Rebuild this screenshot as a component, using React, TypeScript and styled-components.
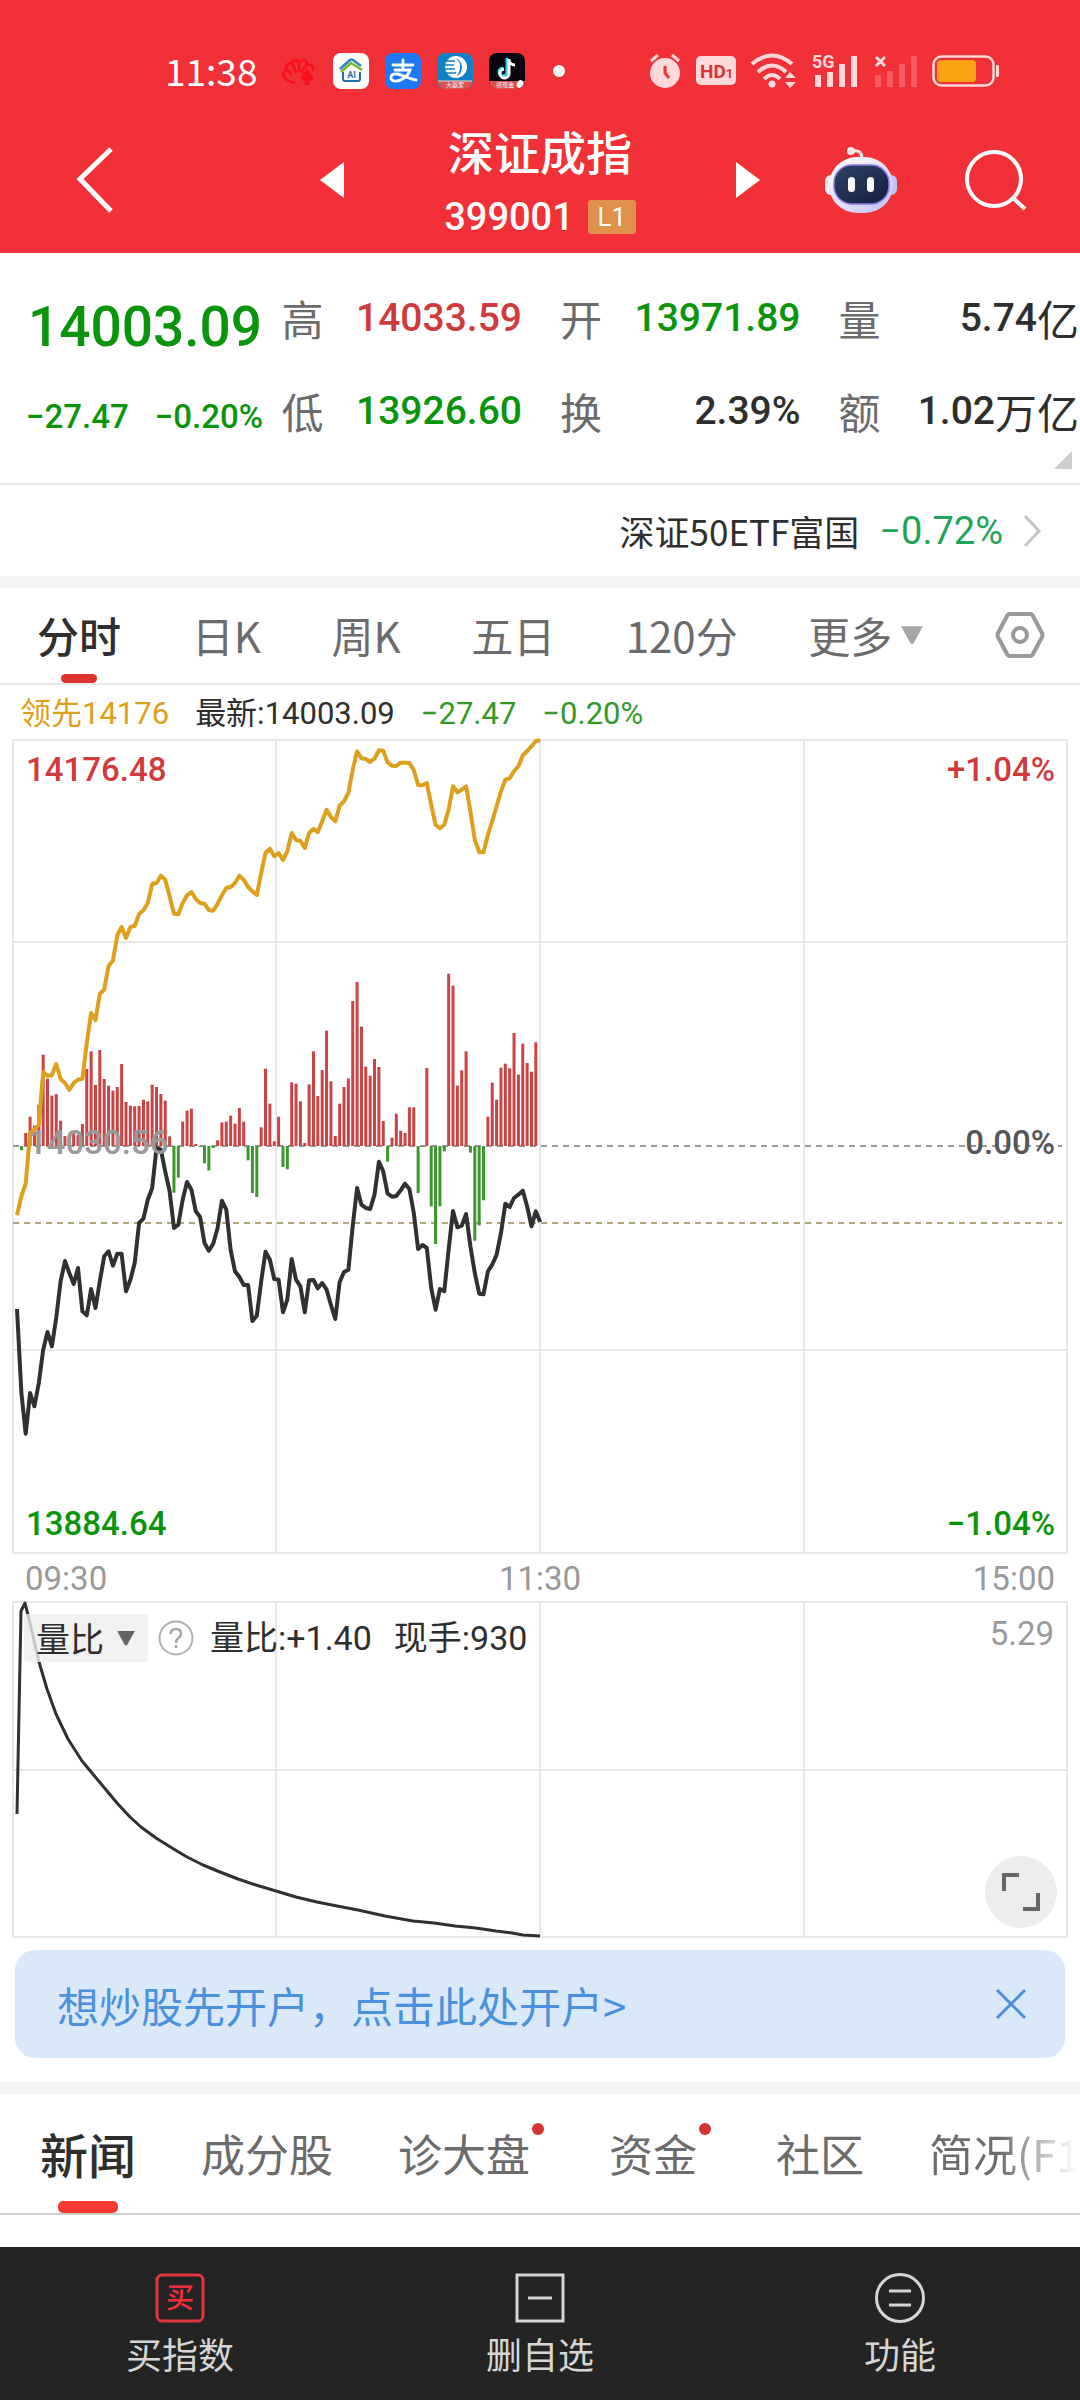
import React from "react";
import styled, { createGlobalStyle } from "styled-components";

const CJK = `"Noto Sans CJK SC", sans-serif`;
const NUM = `Roboto, "Noto Sans CJK SC", sans-serif`;
const C = {
  brand: "#f13037",
  up: "#cf3a3c",
  down: "#0a940c",
  ink: "#2e2e2e",
  sub: "#6b6b6b",
  mute: "#999999",
  line: "#e8e8e8",
  band: "#f4f4f4",
  gold: "#dd9f1c",
};

const Global = createGlobalStyle`
  * { box-sizing: border-box; }
  body { margin: 0; background: #fff; font-family: ${CJK}; color: ${C.ink}; }
  button, select { font: inherit; color: inherit; background: none; border: 0; padding: 0; margin: 0; cursor: pointer; }
  svg { display: block; flex: none; overflow: visible; }
  h1, p, dl, dd, dt { margin: 0; font-weight: 400; }
`;

const Page = styled.div`
  min-height: 100vh;
  display: flex;
  flex-direction: column;
  overflow-x: hidden;
`;
const Header = styled.header`
  background: ${C.brand};
  color: #fff;
`;
const StatusBar = styled.div`
  display: flex;
  align-items: center;
  justify-content: space-between;
  height: 110px;
  padding: 32px 80px 0 165px;
`;
const StatusGroup = styled.div<{ $gap: number }>`
  display: flex;
  align-items: center;
  gap: ${(p) => p.$gap}px;
`;
const Clock = styled.time`
  font: 400 37px/40px ${CJK};
  margin-right: 8px;
  padding-bottom: 2px;
`;
const TitleBar = styled.div`
  display: grid;
  grid-template-columns: 1fr auto 1fr;
  align-items: center;
  height: 143px;
  padding: 0 53px 4px;
`;
const Switcher = styled.div`
  display: flex;
  align-items: center;
  gap: 100px;
  grid-column: 2;
`;
const TitleSide = styled.div<{ $end?: boolean }>`
  display: flex;
  align-items: center;
  gap: 68px;
  padding-left: 23px;
  justify-content: ${(p) => (p.$end ? "flex-end" : "flex-start")};
`;
const TitleBlock = styled.div`
  display: flex;
  flex-direction: column;
  align-items: center;
  gap: 12px;
`;
const Title = styled.h1`
  font: 500 46px/62px ${CJK};
`;
const CodeLine = styled.p`
  display: flex;
  align-items: center;
  gap: 14px;
  font: 500 38px/48px ${NUM};
`;
const Level = styled.span`
  width: 48px;
  background: #e0904a;
  border-radius: 3px;
  text-align: center;
  font: 400 26px/34px ${NUM};
`;

const Quote = styled.section`
  position: relative;
  display: grid;
  grid-template-columns: minmax(0, 217fr) repeat(3, minmax(0, 240fr));
  column-gap: 38px;
  height: 232px;
  padding: 18px 1px 0 26px;
  border-bottom: 2px solid ${C.line};
`;
const Column = styled.dl`
  display: grid;
  grid-template-rows: 93px 93px;
  align-items: center;
`;
const Summary = styled.div`
  display: grid;
  grid-template-rows: 112px 68px;
  align-items: center;
  align-content: start;
  color: ${C.down};
  margin-right: -38px;
  white-space: nowrap;
`;
const Price = styled.strong`
  font: 500 55px/80px ${NUM};
  padding-left: 2px;
`;
const Changes = styled.div`
  display: flex;
  gap: 26px;
  font: 500 33px/44px ${NUM};
`;
const Stat = styled.div`
  display: flex;
  justify-content: space-between;
  align-items: center;
  white-space: nowrap;
  line-height: 60px;
`;
const StatName = styled.dt`
  font-size: 42px;
  color: ${C.sub};
`;
const StatValue = styled.dd<{ $color: string }>`
  display: flex;
  font-family: ${NUM};
  font-size: 39px;
  font-weight: 500;
  color: ${(p) => p.$color};
`;
const Unit = styled.span`
  font: 400 42px/60px ${CJK};
`;
const Corner = styled.svg`
  position: absolute;
  right: 8px;
  bottom: 14px;
`;

const EtfRow = styled.a`
  display: flex;
  align-items: center;
  justify-content: flex-end;
  gap: 20px;
  height: 91px;
  padding: 0 38px 0 36px;
  color: ${C.ink};
  text-decoration: none;
  font-size: 35px;
`;
const EtfChange = styled.span`
  font: 400 38px/48px ${NUM};
  color: #20a35a;
`;
const Band = styled.div`
  height: 12px;
  background: ${C.band};
`;

const PeriodTabs = styled.nav`
  display: flex;
  align-items: stretch;
  justify-content: space-between;
  height: 97px;
  padding: 0 35px 0 37px;
  border-bottom: 2px solid ${C.line};
`;
const Tab = styled.button<{ $on?: boolean }>`
  display: flex;
  align-items: center;
  gap: 8px;
  position: relative;
  padding-bottom: 2px;
  font-size: 42px;
  font-weight: ${(p) => (p.$on ? 500 : 400)};
  color: ${(p) => (p.$on ? C.ink : C.sub)};
`;
const Underline = styled.i<{ $w: number; $h: number; $color: string }>`
  position: absolute;
  left: 50%;
  bottom: 0;
  width: ${(p) => p.$w}px;
  height: ${(p) => p.$h}px;
  margin-left: ${(p) => -p.$w / 2}px;
  border-radius: 5px;
  background: ${(p) => p.$color};
`;
const Legend = styled.div`
  display: flex;
  align-items: center;
  gap: 26px;
  height: 54px;
  padding: 4px 20px 0;
  font: 400 31px/48px ${NUM};
`;
const Tint = styled.span<{ $color: string }>`
  color: ${(p) => p.$color};
`;
const Plot = styled.svg`
  width: 100%;
  height: auto;
`;
const TimeAxis = styled.div`
  display: flex;
  justify-content: space-between;
  padding: 2px 25px 0;
  font: 400 33px/45px ${NUM};
  color: ${C.mute};
`;
const VolumePanel = styled.section`
  position: relative;
`;
const VolumeBar = styled.div`
  position: absolute;
  left: 24px;
  right: 26px;
  top: 13px;
  display: flex;
  align-items: center;
  gap: 10px;
  font: 400 34px/48px ${NUM};
`;
const PickerBox = styled.label`
  display: flex;
  align-items: center;
  gap: 10px;
  height: 48px;
  padding: 0 12px;
  border-radius: 4px;
  background: rgba(238, 238, 238, 0.8);
`;
const Picker = styled.select`
  appearance: none;
  font-family: ${CJK};
  width: 70px;
  height: 48px;
  outline: none;
`;
const Readout = styled.span<{ $lead?: boolean }>`
  margin-left: ${(p) => (p.$lead ? 6 : 12)}px;
`;
const Peak = styled.span`
  align-self: flex-start;
  margin-left: auto;
  font-size: 33px;
  line-height: 40px;
  color: ${C.mute};
`;
const Expand = styled.button`
  position: absolute;
  right: 23px;
  bottom: 10px;
  width: 72px;
  height: 72px;
  border-radius: 50%;
  background: #ececec;
  display: grid;
  place-items: center;
`;

const Banner = styled.div`
  display: flex;
  align-items: center;
  justify-content: space-between;
  height: 108px;
  margin: 12px 15px 24px;
  padding: 0 38px 0 42px;
  border-radius: 20px;
  background: #dae9fa;
  color: #4a90dc;
  font-size: 42px;
`;
const BannerLink = styled.a`
  color: inherit;
  text-decoration: none;
`;

const InfoTabs = styled.nav`
  display: flex;
  gap: 65px;
  height: 121px;
  padding-left: 40px;
  border-bottom: 2px solid #cfcfcf;
  overflow: hidden;
  white-space: nowrap;
`;
const InfoTab = styled(Tab)<{ $dot?: boolean; $fade?: boolean }>`
  flex: none;
  font-size: ${(p) => (p.$on ? 48 : 44)}px;
  margin-right: ${(p) => (p.$dot ? 14 : 0)}px;
  ${(p) =>
    p.$fade &&
    `background: linear-gradient(90deg, ${C.sub} 70px, #fff 148px); background-clip: text; -webkit-background-clip: text; color: transparent;`}
`;
const Dot = styled.i`
  position: absolute;
  right: -14px;
  top: 29px;
  width: 12px;
  height: 12px;
  border-radius: 50%;
  background: #d63333;
`;

const BottomNav = styled.nav`
  display: grid;
  grid-template-columns: repeat(3, 1fr);
  height: 153px;
  margin-top: auto;
  background: #242424;
  color: #d6d6d6;
`;
const NavItem = styled.button`
  display: flex;
  flex-direction: column;
  align-items: center;
  gap: 6px;
  padding-top: 26px;
  font-size: 36px;
  line-height: 48px;
`;

/* Per-minute series for the morning session; three ticks make one pixel,
   measured from the previous-close line (positive is above it). */
const TICKS = 3;
const ORIGIN_X = 17;
const STEP = 4.36;
const ZERO_Y = 407;

const FLOW = [
  0, -13, 39, 88, 61, 124, 274, 202, 151, 156, 76, 30, 9, 38, 34, 66, 231, 284, 183, 288, 201, 181, 166, 177, 246, 132,
  121, 119, 120, 139, 134, 184, 177, 156, 136, 29, -140, -95, 73, 106, 112, 6, -3, -52, -73, -6, 17, 71, 73, 91, 67,
  114, 73, -43, -141, -153, 56, 232, 127, 14, 88, -63, -70, 191, 187, 134, 9, 185, 284, 150, 228, 346, 194, 30, 127,
  177, 203, 435, 492, 358, 238, 211, 261, 237, 75, -47, 25, 97, 46, 39, 116, 116, -141, -2, 234, -181, -294, -181, -16,
  517, 481, 181, 227, 284, -20, -284, -238, -163, 88, 190, 139, 235, 247, 233, 339, 214, 307, 249, 223, 311,
];
const LEAD = [
  1457, 1400, 1362, 1210, 1200, 1185, 1027, 1038, 1037, 1003, 1048, 1060, 1081, 1060, 1050, 1047, 940, 850, 872, 792,
  780, 708, 693, 617, 592, 625, 592, 589, 553, 542, 520, 463, 460, 438, 450, 500, 552, 554, 520, 497, 487, 508, 520,
  522, 541, 543, 522, 497, 475, 472, 460, 438, 450, 472, 485, 496, 430, 370, 357, 380, 370, 391, 365, 310, 331, 334,
  355, 310, 298, 307, 275, 240, 262, 275, 228, 215, 190, 120, 65, 86, 88, 97, 87, 62, 63, 98, 108, 109, 99, 99, 100,
  122, 166, 167, 160, 225, 285, 296, 285, 240, 170, 188, 180, 170, 245, 330, 367, 368, 315, 275, 230, 185, 150, 146,
  125, 110, 77, 65, 50, 34, 32,
].map((v) => 1249 - v);
const INDEX = [
  628, 880, 1002, 880, 920, 850, 750, 697, 740, 655, 545, 484, 520, 553, 505, 635, 647, 568, 625, 545, 470, 455, 498,
  462, 462, 575, 540, 490, 370, 357, 300, 265, 145, 150, 215, 275, 385, 375, 300, 247, 270, 335, 352, 430, 453, 432,
  385, 303, 330, 450, 515, 532, 556, 556, 664, 648, 545, 456, 480, 538, 540, 638, 600, 478, 540, 560, 638, 542, 541,
  566, 550, 570, 615, 658, 548, 517, 510, 380, 265, 315, 325, 328, 285, 186, 215, 282, 291, 289, 272, 252, 268, 340,
  448, 436, 445, 565, 630, 568, 575, 450, 334, 383, 378, 343, 440, 520, 582, 584, 515, 495, 465, 400, 312, 322, 295,
  285, 273, 320, 380, 335, 367,
].map((v) => 139 - v);

const xAt = (i: number) => ORIGIN_X + i * STEP;
const toPoints = (s: number[]) => s.map((v, i) => `${xAt(i).toFixed(1)},${(ZERO_Y - v / TICKS).toFixed(1)}`).join(" ");

const RATIO =
  "17,213 21,10 25,2 30,22 39,61 47,88 56,113 68,138 82,160 97,178 117,202 130,216 141,226 156,237 172,247 187,256 203,264 220,271 238,278 256,284 276,290 296,296 317,301 337,305 358,309 385,315 413,320 434,322 455,325 476,327 496,330 512,332 523,334 540,335";

const label = { fontFamily: NUM, fontSize: 33, fontWeight: 500 };

const Grid = ({ h, rows }: { h: number; rows: number[] }) => (
  <g stroke={C.line} strokeWidth="2" fill="none">
    <rect x="13" y="1" width="1054" height={h} />
    {[276, 540, 804].map((x) => (
      <line key={x} x1={x} x2={x} y1="1" y2={h + 1} />
    ))}
    {rows.map((y) => (
      <line key={y} x1="13" x2="1067" y1={y} y2={y} />
    ))}
  </g>
);

const PriceChart = () => (
  <Plot viewBox="0 0 1080 815" role="img" aria-label="分时走势">
    <Grid h={813} rows={[203, 611]} />
    <line x1="13" x2="1062" y1="407" y2="407" stroke="#999" strokeWidth="2" strokeDasharray="6 5" />
    <line x1="13" x2="1062" y1="484" y2="484" stroke="#b3a47a" strokeWidth="2" strokeDasharray="6 5" />
    {FLOW.map((v, i) => (
      <rect
        key={i}
        x={xAt(i) - 1.5}
        width="3"
        y={v > 0 ? ZERO_Y - v / TICKS : ZERO_Y}
        height={Math.abs(v) / TICKS}
        fill={v > 0 ? "#cb4344" : "#3c982c"}
      />
    ))}
    <polyline points={toPoints(INDEX)} fill="none" stroke="#303030" strokeWidth="4" strokeLinejoin="round" />
    <polyline points={toPoints(LEAD)} fill="none" stroke={C.gold} strokeWidth="4" strokeLinejoin="round" />
    <text x="26" y="42" fill={C.up} style={label}>14176.48</text>
    <text x="28" y="415" fill={C.mute} style={label}>14030.56</text>
    <text x="26" y="796" fill={C.down} style={label}>13884.64</text>
    <text x="1055" y="42" fill={C.up} textAnchor="end" style={label}>+1.04%</text>
    <text x="1055" y="415" fill="#555" textAnchor="end" style={label}>0.00%</text>
    <text x="1055" y="796" fill={C.down} textAnchor="end" style={label}>−1.04%</text>
  </Plot>
);

const Triangle = ({ color, w = 20, h = 16 }: { color: string; w?: number; h?: number }) => (
  <svg width={w} height={h} viewBox="0 0 22 18">
    <path d="M1 1H21L12.500 16.500Q11 18 9.500 16.500Z" fill={color} />
  </svg>
);

const AppIcons = () => (
  <>
    <svg width="36" height="36" viewBox="0 0 36 36">
      <g fill="none" stroke="#fb0f18" strokeWidth="2.500">
        <path d="M14 30C4 28 1 23 3 19C4 16 9 17 10 22M5 16C5 10 9 9 12 12L15 20M11 10C13 5 18 6 18 11V19M19 9C23 5 27 8 25 12L20 20M26 12C31 11 34 15 31 18" />
      </g>
      <path d="M26 15C28 20 33 22 32 26C31 29 28 28 27 27L29 32H23L25 27C23 29 20 28 20 25C20 22 24 20 26 15Z" fill="#fb0f18" />
    </svg>
    <svg width="36" height="36" viewBox="0 0 36 36">
      <rect width="36" height="36" rx="8" fill="#fff" />
      <path d="M7 16L17 7Q18 6 20 7L28 13" fill="none" stroke="#2b86c4" strokeWidth="2.500" />
      <path d="M8 19L18 10L29 17" fill="none" stroke="#7ab82e" strokeWidth="2.500" />
      <path d="M10 19V26Q10 28 12 28H25Q27 28 27 26V19" fill="none" stroke="#1f6fb0" strokeWidth="2" />
      <text x="18.500" y="25" textAnchor="middle" fontSize="9" fontWeight="700" fill="#1f6fb0" fontFamily={NUM}>AI</text>
    </svg>
    <svg width="36" height="36" viewBox="0 0 36 36">
      <rect width="36" height="36" rx="8" fill="#1d78f5" />
      <path
        d="M8 12H28M18 7V17M10 17H25C23 24 15 29 9 28C4 27 5 20 12 21C18 22 24 26 31 27"
        fill="none"
        stroke="#fff"
        strokeWidth="2.800"
        strokeLinecap="round"
      />
    </svg>
    <svg width="36" height="36" viewBox="0 0 36 36">
      <rect width="36" height="36" rx="8" fill="#1280c4" />
      <path d="M1 28H35Q34 36 28 36H8Q2 36 1 28Z" fill="#d9544f" />
      <path d="M1 28H35" stroke="#f5d5c0" strokeWidth="1" />
      <circle cx="19" cy="14" r="11" fill="#fff" />
      <path d="M8 8H18M7 12H17M7 16H18M9 20H19" stroke="#1280c4" strokeWidth="1.500" />
      <path d="M18 5C24 9 25 15 20 23C27 20 27 8 18 5Z" fill="#1280c4" />
      <text x="18" y="34" textAnchor="middle" fontSize="6" fill="#fff" fontFamily={CJK}>大赢家</text>
    </svg>
    <svg width="36" height="36" viewBox="0 0 36 36">
      <rect width="36" height="36" rx="8" fill="#08060f" />
      <path d="M0 28H36Q35 36 28 36H8Q1 36 0 28Z" fill="#d9504c" />
      <path d="M18 5V19A4 4 0 1 1 14 15" fill="none" stroke="#25d5e0" strokeWidth="3" />
      <path d="M20 6V20A4.500 4.500 0 1 1 15 16M20 6C20 10 23 12 26 12" fill="none" stroke="#fff" strokeWidth="3" />
      <text x="16" y="34" textAnchor="middle" fontSize="6" fill="#fff" fontFamily={CJK}>领现金</text>
      <ellipse cx="31" cy="31" rx="3" ry="4" fill="#fff" transform="rotate(30 31 31)" />
    </svg>
  </>
);

const P = "#ffd9da";
const SystemIcons = () => (
  <>
    <svg width="32" height="36" viewBox="0 0 32 36">
      <circle cx="16" cy="20" r="15" fill={P} />
      <path d="M2 8L9 2M30 8L23 2" stroke={P} strokeWidth="3" />
      <path d="M16 13V20L20 25" fill="none" stroke={C.brand} strokeWidth="3" />
    </svg>
    <svg width="40" height="30" viewBox="0 0 40 30">
      <rect width="40" height="29" rx="5" fill={P} />
      <text x="4" y="22" fill="#d8343a" style={{ fontFamily: NUM, fontSize: 19, fontWeight: 700 }}>
        HD<tspan fontSize="13">1</tspan>
      </text>
    </svg>
    <svg width="46" height="36" viewBox="0 0 46 36">
      <g fill="none" stroke={P} strokeWidth="4">
        <path d="M1 11Q21 -6 41 11M7 19Q21 6 35 19M13 26Q21 18 29 26" />
      </g>
      <circle cx="21" cy="31" r="3.500" fill={P} />
      <path d="M34 25L39 19L45 25ZM34 29L39 35L45 29Z" fill={P} />
    </svg>
    <svg width="46" height="36" viewBox="0 0 46 36">
      <text x="0" y="15" fill={P} style={{ fontFamily: NUM, fontSize: 18, fontWeight: 700 }}>5G</text>
      <path d="M3 22H9V34H3ZM15 19H21V34H15ZM27 11H33V34H27ZM39 3H45V34H39Z" fill={P} />
    </svg>
    <svg width="44" height="36" viewBox="0 0 44 36">
      <path d="M2 22H8V34H2ZM14 18H20V34H14ZM26 11H32V34H26ZM38 3H44V34H38Z" fill="#f55a60" />
      <path d="M3 4L12 13M12 4L3 13" stroke={P} strokeWidth="3" />
    </svg>
    <svg width="68" height="36" viewBox="0 0 68 36">
      <rect x="1.500" y="3.500" width="60" height="29" rx="8" fill="none" stroke={P} strokeWidth="2.500" />
      <rect x="5" y="7" width="39" height="22" rx="4" fill="#fba314" />
      <rect x="64" y="12" width="3" height="12" rx="1" fill={P} />
    </svg>
  </>
);

const Robot = () => (
  <svg width="72" height="68" viewBox="0 0 72 68">
    <defs>
      <linearGradient id="shell" x1="0" y1="0" x2="1" y2="1">
        <stop offset="0" stopColor="#ffffff" />
        <stop offset="0.5" stopColor="#e6e2fa" />
        <stop offset="1" stopColor="#b9bdf2" />
      </linearGradient>
      <linearGradient id="visor" x1="0" y1="0" x2="1" y2="1">
        <stop offset="0" stopColor="#2c4468" />
        <stop offset="1" stopColor="#151d3e" />
      </linearGradient>
    </defs>
    <path d="M27 5Q37 3 37 13" fill="none" stroke="#fde6ea" strokeWidth="3" />
    <circle cx="26" cy="5" r="4" fill="#fde6ea" />
    <rect x="0" y="29" width="12" height="20" rx="6" fill="#e9e6fb" />
    <rect x="60" y="29" width="12" height="20" rx="6" fill="#c3c4f6" />
    <rect x="4" y="11" width="64" height="56" rx="28" fill="url(#shell)" />
    <rect x="9" y="19" width="55" height="39" rx="18" fill="url(#visor)" stroke="#8d79e8" strokeWidth="1.500" />
    <rect x="23" y="31" width="7" height="15" rx="3.500" fill="#fff" />
    <rect x="42" y="31" width="7" height="15" rx="3.500" fill="#fff" />
  </svg>
);

const STATS = [
  [["高", "14033.59", "", C.up], ["低", "13926.60", "", C.down]],
  [["开", "13971.89", "", C.down], ["换", "2.39%", "", C.ink]],
  [["量", "5.74", "亿", C.ink], ["额", "1.02", "万亿", C.ink]],
];

export default function App() {
  return (
    <Page>
      <Global />
      <Header>
        <StatusBar>
          <StatusGroup $gap={16}>
            <Clock>11:38</Clock>
            <AppIcons />
            <svg width="52" height="12" viewBox="0 0 52 12"><circle cx="18" cy="6" r="6" fill="#fff" /></svg>
          </StatusGroup>
          <StatusGroup $gap={15}>
            <SystemIcons />
          </StatusGroup>
        </StatusBar>
        <TitleBar>
          <TitleSide>
            <button aria-label="返回">
              <svg width="38" height="66" viewBox="0 0 38 66"><path d="M35 2L4 32L35 64" fill="none" stroke="#fff" strokeWidth="5" /></svg>
            </button>
          </TitleSide>
          <Switcher>
            <button aria-label="上一个">
              <svg width="24" height="36" viewBox="0 0 24 36"><path d="M24 0V36L0 18Z" fill="#fff" /></svg>
            </button>
            <TitleBlock>
              <Title>深证成指</Title>
              <CodeLine>399001<Level>L1</Level></CodeLine>
            </TitleBlock>
            <button aria-label="下一个">
              <svg width="24" height="36" viewBox="0 0 24 36"><path d="M0 0V36L24 18Z" fill="#fff" /></svg>
            </button>
          </Switcher>
          <TitleSide $end>
            <button aria-label="智能助手"><Robot /></button>
            <button aria-label="搜索">
              <svg width="62" height="60" viewBox="0 0 62 60">
                <circle cx="29" cy="29" r="27" fill="none" stroke="#fff" strokeWidth="4" />
                <path d="M48 48L60 59" stroke="#fff" strokeWidth="4" />
              </svg>
            </button>
          </TitleSide>
        </TitleBar>
      </Header>

      <Quote>
        <Summary>
          <Price>14003.09</Price>
          <Changes><span>−27.47</span><span>−0.20%</span></Changes>
        </Summary>
        {STATS.map((col, i) => (
          <Column key={i}>
            {col.map(([name, value, unit, color]) => (
              <Stat key={name}>
                <StatName>{name}</StatName>
                <StatValue $color={color}>{value}{unit && <Unit>{unit}</Unit>}</StatValue>
              </Stat>
            ))}
          </Column>
        ))}
        <Corner width="18" height="18" viewBox="0 0 18 18"><path d="M18 0V18H0Z" fill="#ccc" /></Corner>
      </Quote>

      <EtfRow href="#etf">
        <span>深证50ETF富国</span>
        <EtfChange>−0.72%</EtfChange>
        <svg width="19" height="34" viewBox="0 0 19 34"><path d="M2 2L16 17L2 32" fill="none" stroke="#c4c4c4" strokeWidth="3" /></svg>
      </EtfRow>
      <Band />

      <PeriodTabs>
        <Tab $on>分时<Underline $w={36} $h={9} $color="#e0322f" /></Tab>
        <Tab>日K</Tab>
        <Tab>周K</Tab>
        <Tab>五日</Tab>
        <Tab>120分</Tab>
        <Tab aria-haspopup="true">更多<Triangle color="#a6a6a6" w={24} h={20} /></Tab>
        <Tab aria-label="设置">
          <svg width="50" height="48" viewBox="0 0 50 48">
            <path d="M15 3H35Q37 3 38 5L47 22Q48 24 47 26L38 43Q37 45 35 45H15Q13 45 12 43L3 26Q2 24 3 22L12 5Q13 3 15 3Z" fill="none" stroke="#999" strokeWidth="4" />
            <circle cx="25" cy="24" r="7" fill="none" stroke="#999" strokeWidth="4" />
          </svg>
        </Tab>
      </PeriodTabs>
      <Legend>
        <Tint $color={C.gold}>领先14176</Tint>
        <span>最新:14003.09</span>
        <Tint $color="#329a28">−27.47</Tint>
        <Tint $color="#329a28">−0.20%</Tint>
      </Legend>
      <PriceChart />
      <TimeAxis><span>09:30</span><span>11:30</span><span>15:00</span></TimeAxis>
      <VolumePanel>
        <Plot viewBox="0 0 1080 337" role="img" aria-label="量比走势">
          <Grid h={335} rows={[169]} />
          <polyline points={RATIO} fill="none" stroke="#303030" strokeWidth="3" strokeLinejoin="round" />
        </Plot>
        <VolumeBar>
          <PickerBox>
            <Picker aria-label="指标" defaultValue="量比"><option>量比</option></Picker>
            <Triangle color="#666" />
          </PickerBox>
          <button aria-label="说明">
            <svg width="36" height="36" viewBox="0 0 36 36">
              <circle cx="18" cy="18" r="16.500" fill="none" stroke="#b0b0b0" strokeWidth="2" />
              <path d="M12.500 14Q13 9 18 9Q23 9 23 14Q23 16 20 18.500Q18 20 18 23M18 25V28" fill="none" stroke="#a6a6a6" strokeWidth="2.500" />
            </svg>
          </button>
          <Readout $lead>量比:+1.40</Readout>
          <Readout>现手:930</Readout>
          <Peak>5.29</Peak>
        </VolumeBar>
        <Expand aria-label="全屏">
          <svg width="40" height="40" viewBox="0 0 40 40">
            <path d="M3 19V3H18M37 21V37H22" fill="none" stroke="#666" strokeWidth="4" />
          </svg>
        </Expand>
      </VolumePanel>

      <Banner>
        <BannerLink href="#open">想炒股先开户，点击此处开户&gt;</BannerLink>
        <button aria-label="关闭">
          <svg width="32" height="32" viewBox="0 0 32 32"><path d="M2 2L30 30M30 2L2 30" stroke="#4a90dc" strokeWidth="3" /></svg>
        </button>
      </Banner>
      <Band />

      <InfoTabs>
        <InfoTab $on>新闻<Underline $w={60} $h={12} $color="#f93a32" /></InfoTab>
        <InfoTab>成分股</InfoTab>
        <InfoTab $dot>诊大盘<Dot /></InfoTab>
        <InfoTab $dot>资金<Dot /></InfoTab>
        <InfoTab>社区</InfoTab>
        <InfoTab $fade>简况(F10)</InfoTab>
      </InfoTabs>

      <BottomNav>
        <NavItem>
          <svg width="50" height="50" viewBox="0 0 50 50">
            <rect x="2" y="2" width="46" height="46" rx="5" fill="none" stroke="#e2373b" strokeWidth="3" />
            <text x="25" y="35" textAnchor="middle" fontSize="28" fontWeight="500" fill="#f0303c" fontFamily={CJK}>买</text>
          </svg>
          买指数
        </NavItem>
        <NavItem>
          <svg width="50" height="50" viewBox="0 0 50 50">
            <path d="M2 2H48V48H2ZM13 25H37" fill="none" stroke="#d6d6d6" strokeWidth="3" />
          </svg>
          删自选
        </NavItem>
        <NavItem>
          <svg width="50" height="50" viewBox="0 0 50 50">
            <circle cx="25" cy="25" r="23.500" fill="none" stroke="#d6d6d6" strokeWidth="3" />
            <path d="M14 18H36M14 32H36" stroke="#d6d6d6" strokeWidth="3" />
          </svg>
          功能
        </NavItem>
      </BottomNav>
    </Page>
  );
}
